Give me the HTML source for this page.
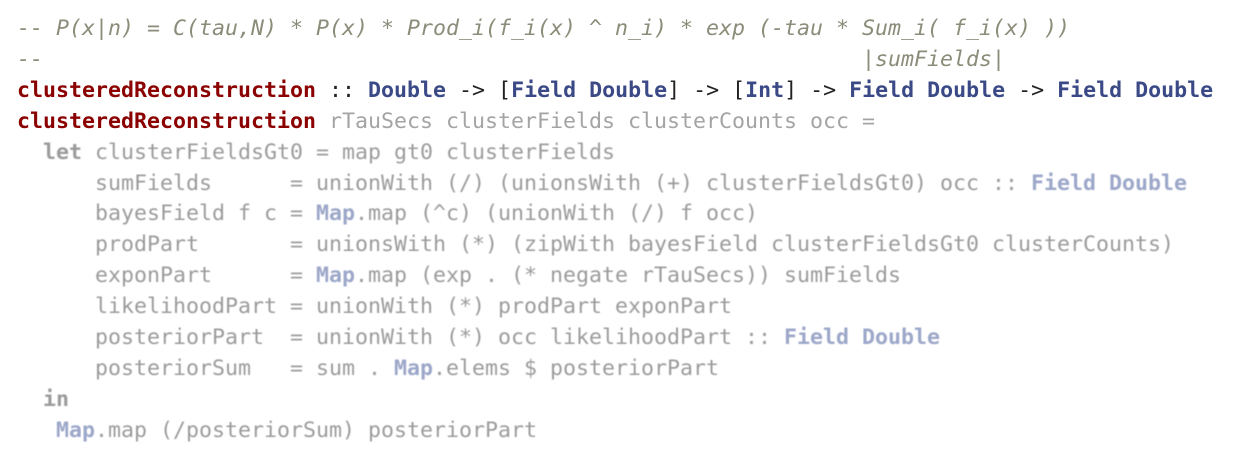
<!DOCTYPE html>
<html><head><style>
body{margin:0;background:#fff;width:1242px;height:460px;overflow:hidden}
pre{margin:0;position:absolute;left:17px;top:14px;font-family:"DejaVu Sans Mono","Liberation Mono",monospace;font-size:21.6px;line-height:30.9px;color:#222}
.c{color:#8c8c7a;font-style:italic}
.k{color:#8b0000;font-weight:bold}
.t{color:#3b4a86;font-weight:bold}
.f{color:#a4a4a4}
.fb{color:#9b9b9b;filter:blur(0.5px)}
.fb b{font-weight:bold}
.ft{color:#9ca7c9;font-weight:bold}
</style></head><body>
<pre><span class="c">-- P(x|n) = C(tau,N) * P(x) * Prod_i(f_i(x) ^ n_i) * exp (-tau * Sum_i( f_i(x) ))
--                                                               |sumFields|</span>
<span class="k">clusteredReconstruction</span> :: <span class="t">Double</span> -&gt; [<span class="t">Field Double</span>] -&gt; [<span class="t">Int</span>] -&gt; <span class="t">Field Double</span> -&gt; <span class="t">Field Double</span>
<span class="k">clusteredReconstruction</span> <span class="f">rTauSecs clusterFields clusterCounts occ =</span>
<span class="fb">  <b>let</b> clusterFieldsGt0 = map gt0 clusterFields
      sumFields      = unionWith (/) (unionsWith (+) clusterFieldsGt0) occ :: <span class="ft">Field Double</span>
      bayesField f c = <span class="ft">Map</span>.map (^c) (unionWith (/) f occ)
      prodPart       = unionsWith (*) (zipWith bayesField clusterFieldsGt0 clusterCounts)
      exponPart      = <span class="ft">Map</span>.map (exp . (* negate rTauSecs)) sumFields
      likelihoodPart = unionWith (*) prodPart exponPart
      posteriorPart  = unionWith (*) occ likelihoodPart :: <span class="ft">Field Double</span>
      posteriorSum   = sum . <span class="ft">Map</span>.elems $ posteriorPart
  <b>in</b>
   <span class="ft">Map</span>.map (/posteriorSum) posteriorPart</span></pre>
</body></html>
